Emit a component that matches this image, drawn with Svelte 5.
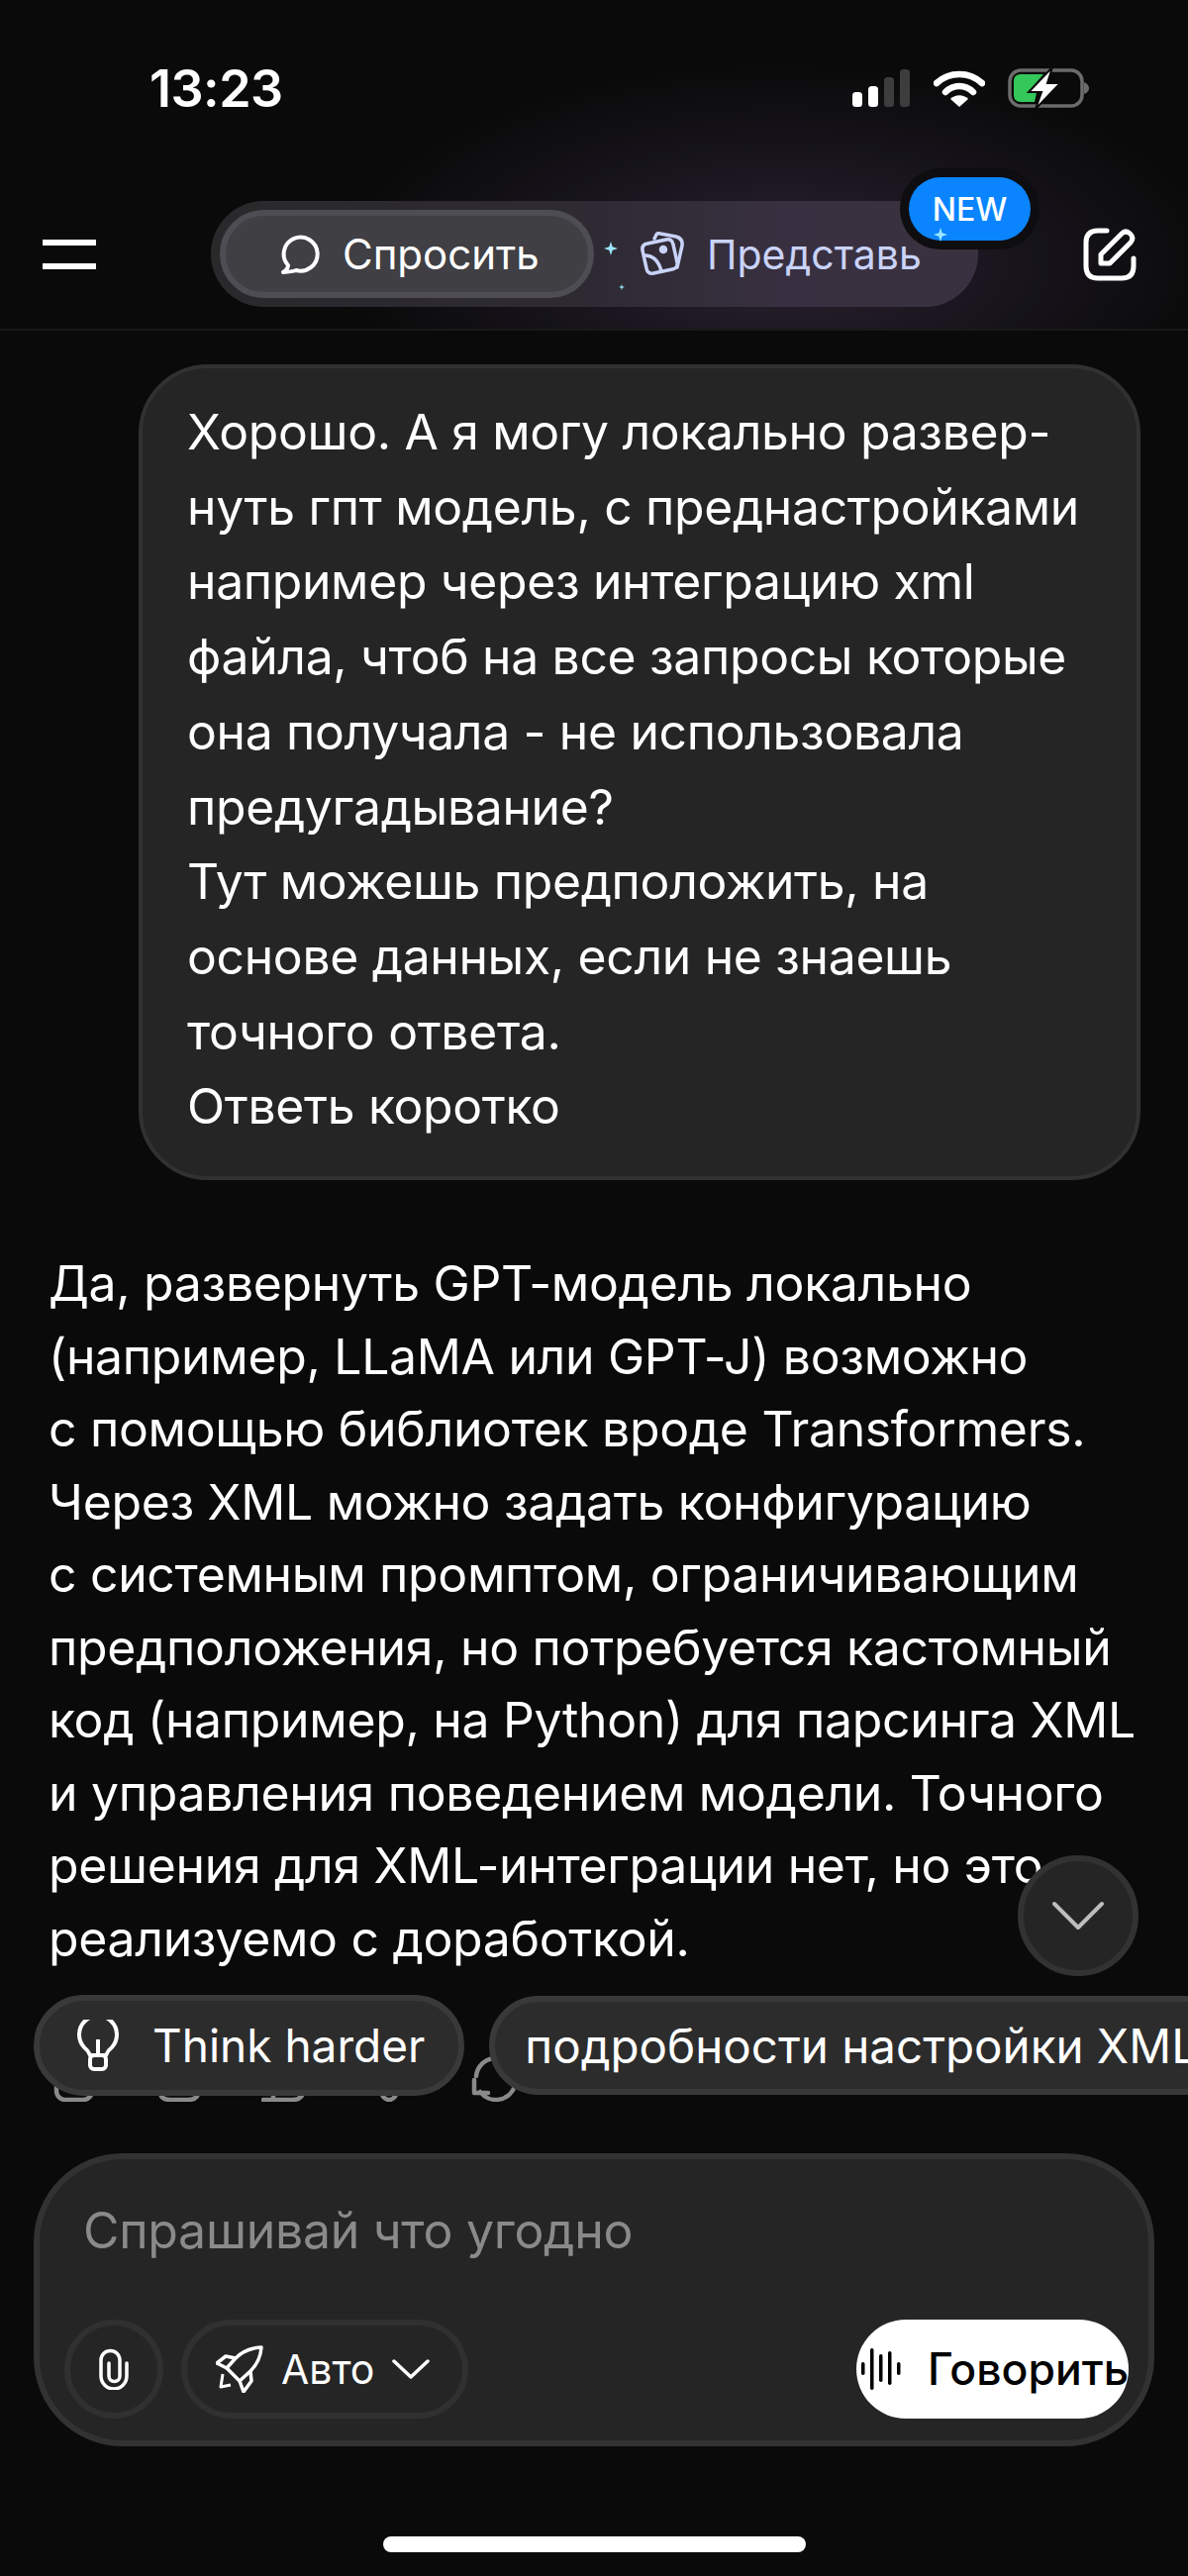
<script>
    const userLines = [
        "Хорошо. А я могу локально развер-",
        "нуть гпт модель, с преднастройками",
        "например через интеграцию xml",
        "файла, чтоб на все запросы которые",
        "она получала - не использовала",
        "предугадывание?",
        "Тут можешь предположить, на",
        "основе данных, если не знаешь",
        "точного ответа.",
        "Ответь коротко",
    ];
    const replyLines = [
        "Да, развернуть GPT-модель локально",
        "(например, LLaMA или GPT-J) возможно",
        "с помощью библиотек вроде Transformers.",
        "Через XML можно задать конфигурацию",
        "с системным промптом, ограничивающим",
        "предположения, но потребуется кастомный",
        "код (например, на Python) для парсинга XML",
        "и управления поведением модели. Точного",
        "решения для XML-интеграции нет, но это",
        "реализуемо с доработкой.",
    ];
</script>

<div class="app">
    <div class="top">
        <div class="status">
            <span class="time">13:23</span>
            <div class="status-icons">
                <svg width="60" height="38" viewBox="0 0 60 38">
                    <rect x="1" y="23" width="10" height="15" rx="3.5" fill="#fff" />
                    <rect x="17" y="17" width="10" height="21" rx="3.5" fill="#fff" />
                    <rect x="33" y="8" width="10" height="30" rx="3.5" fill="#3d3d3d" />
                    <rect x="49" y="0" width="10" height="38" rx="3.5" fill="#3d3d3d" />
                </svg>
                <svg width="52" height="38" viewBox="0 0 52 38">
                    <path d="M3 14 C16 2 36 2 49 14" fill="none" stroke="#fff" stroke-width="6.5" stroke-linecap="round" />
                    <path d="M12 23 C20 15 32 15 40 23" fill="none" stroke="#fff" stroke-width="6.5" stroke-linecap="round" />
                    <path d="M17 30 C22 25 30 25 35 30 L26 38 Z" fill="#fff" />
                </svg>
                <svg class="battery" width="82" height="40" viewBox="0 0 82 40">
                    <rect x="2" y="2" width="73" height="36" rx="11" fill="none" stroke="#6b6b6b" stroke-width="3.5" />
                    <path d="M77 14 Q82 16 82 20 Q82 24 77 26 Z" fill="#6b6b6b" />
                    <path d="M6 13 Q6 6 13 6 H36 L24 20 H30 L27 34 H13 Q6 34 6 27 Z" fill="#34c759" />
                    <path d="M45 -1 L21 24 H34 L28 41 L53 15 H40 Z" fill="#fff" stroke="#0b0b0d" stroke-width="2" />
                </svg>
            </div>
        </div>
        <header class="header">
            <div class="burger"><span></span><span></span></div>
            <div class="seg">
                <div class="seg-active">
                    <svg width="40" height="40" viewBox="0 0 40 40">
                        <path d="M8 31 A17 17 0 1 1 16 36 Q12 37.500 3 38 Q8 35 8 31 Z" fill="none" stroke="#fff" stroke-width="4" stroke-linejoin="round" />
                    </svg>
                    <span>Спросить</span>
                </div>
                <div class="seg-item">
                    <svg width="46" height="46" viewBox="0 0 46 46" fill="none" stroke="#c9d3f8" stroke-width="3.500" stroke-linecap="round" stroke-linejoin="round">
                        <path d="M15 7 L17 3 Q18 1 21 2 L37 5 Q44 7 43 14 L38 36" />
                        <path d="M8 12 L27 8 Q33 7 34 13 L38 31 Q39 37 33 38 L14 42 Q8 43 7 37 L3 19 Q2 13 8 12 Z" />
                        <path d="M5 24 Q18 24 22 40" />
                        <circle cx="24" cy="18" r="2.500" fill="#c9d3f8" />
                    </svg>
                    <span>Представь</span>
                </div>
                <i class="star star-a"></i>
                <i class="star star-b"></i>
                <div class="badge">NEW<i class="star star-c"></i></div>
            </div>
            <svg class="compose" width="54" height="54" viewBox="0 0 54 54" fill="none" stroke="#fff" stroke-width="5" stroke-linecap="round" stroke-linejoin="round">
                <path d="M24 3 H15 Q3 3 3 15 V39 Q3 51 15 51 H39 Q51 51 51 39 V31" />
                <path d="M18 36 V27 L39 6 Q43 2 47.500 6 Q52 10 48 15 L27 36 Z" />
            </svg>
        </header>
    </div>

    <main class="main">
        <div class="bubble">
            {#each userLines as line}
                <div>{line}</div>
            {/each}
        </div>

        <div class="reply">
            {#each replyLines as line}
                <div>{line}</div>
            {/each}
        </div>

        <div class="actions">
            <svg viewBox="0 0 46 46"><rect x="5" y="8" width="36" height="36" rx="9" /></svg>
            <svg viewBox="0 0 46 46"><path d="M3 28 V33 Q3 44 14 44 H32 Q43 44 43 33 V28" /></svg>
            <svg viewBox="0 0 46 46"><path d="M2 44 H32 Q42 44 44 32 M12 30 V44" /></svg>
            <svg viewBox="0 0 46 46"><path d="M14 32 Q16 44 23 44 Q30 44 32 32" /></svg>
            <svg viewBox="0 0 46 46"><path d="M5 20 A20 20 0 0 1 24 2 M44 30 A20 20 0 0 1 9 36 M3 24 V37 H17" /></svg>
        </div>

        <button class="scroll-down" aria-label="Вниз">
            <svg width="52" height="30" viewBox="0 0 52 30" fill="none" stroke="#bdbdbd" stroke-width="4" stroke-linecap="round" stroke-linejoin="round">
                <path d="M2 3 L26 27 L50 3" />
            </svg>
        </button>

        <div class="chips">
            <div class="chip">
                <svg width="42" height="52" viewBox="0 0 42 52" fill="none" stroke="#fff" stroke-width="4" stroke-linejoin="round">
                    <path d="M13 36 Q11 31 7 28 A19 19 0 1 1 35 28 Q31 31 29 36 Z" />
                    <rect x="13" y="36" width="16" height="14" rx="4" />
                    <path d="M21 20 V36" />
                </svg>
                <span>Think harder</span>
            </div>
            <div class="chip chip-second"><span>подробности настройки XML</span></div>
        </div>
    </main>

    <div class="composer">
        <div class="placeholder">Спрашивай что угодно</div>
        <div class="tools">
            <button class="attach" aria-label="Прикрепить">
                <svg width="32" height="42" viewBox="0 0 32 42" fill="none" stroke="#fff" stroke-width="3.500" stroke-linecap="round">
                    <path d="M29 15 V28 A13 13 0 0 1 3 28 V12 A9.500 9.500 0 0 1 22 12 V28 A5.500 5.500 0 0 1 11 28 V15" />
                </svg>
            </button>
            <button class="mode">
                <svg width="48" height="48" viewBox="0 0 48 48" fill="none" stroke="#fff" stroke-width="3.500" stroke-linejoin="round">
                    <path d="M46 2 Q30 3 20 13 L11 23 L24 36 L35 26 Q45 16 46 2 Z" />
                    <path d="M20 13 L10 11 L1 18 L11 23 M35 26 L36 36 L28 47 L24 36" />
                    <path d="M7 29 L5 42 L15 40" stroke-width="3" />
                </svg>
                <span>Авто</span>
                <svg width="38" height="22" viewBox="0 0 38 22" fill="none" stroke="#fff" stroke-width="3.500" stroke-linecap="round" stroke-linejoin="round">
                    <path d="M2 3 L19 19 L36 3" />
                </svg>
            </button>
            <button class="speak">
                <svg width="40" height="42" viewBox="0 0 40 42" fill="#000">
                    <rect x="0" y="14" width="3.500" height="13" rx="1.700" />
                    <rect x="9" y="0" width="3.500" height="42" rx="1.700" />
                    <rect x="18" y="6" width="3.500" height="28" rx="1.700" />
                    <rect x="27" y="3" width="3.500" height="34" rx="1.700" />
                    <rect x="36" y="14" width="3.500" height="13" rx="1.700" />
                </svg>
                <span>Говорить</span>
            </button>
        </div>
    </div>

    <div class="home"></div>
</div>

<style>
    :global(body) {
        margin: 0;
        background: #0a0a0a;
    }

    .app {
        position: relative;
        display: flex;
        flex-direction: column;
        width: 1200px;
        height: 2602px;
        overflow: hidden;
        background: #0a0a0a;
        color: #fff;
        font-family: Inter, "Noto Sans", sans-serif;
    }

    /* top bars */
    .top {
        height: 332px;
        border-bottom: 2px solid #191919;
        background: radial-gradient(ellipse 440px 200px at 790px 265px, #2a2230 0%, #17141c 55%, rgba(10, 10, 10, 0) 100%);
    }

    .status {
        display: flex;
        align-items: center;
        justify-content: space-between;
        height: 178px;
        padding: 0 100px 0 151px;
        box-sizing: border-box;
    }

    .time {
        font-size: 52px;
        font-weight: 600;
        letter-spacing: -0.5px;
    }

    .status-icons {
        display: flex;
        align-items: center;
        gap: 23px;
    }

    .battery {
        overflow: visible;
    }

    .header {
        display: flex;
        align-items: center;
        height: 154px;
        padding: 3px 52px 0 43px;
        box-sizing: border-box;
    }

    .burger {
        display: flex;
        flex-direction: column;
        gap: 18px;
    }

    .burger span {
        display: block;
        width: 54px;
        height: 6px;
        background: #fff;
    }

    .seg {
        position: relative;
        display: flex;
        align-items: center;
        box-sizing: border-box;
        width: 775px;
        height: 107px;
        margin-left: 116px;
        padding: 0 9px;
        border-radius: 54px;
        background: linear-gradient(90deg, #29292b 0%, #2e2a33 50%, #383040 75%, #3a3140 100%);
    }

    .seg-active {
        display: flex;
        align-items: center;
        gap: 23px;
        box-sizing: border-box;
        width: 378px;
        height: 89px;
        padding-left: 55px;
        border: 6px solid #4e4d53;
        border-radius: 45px;
        background: #403f44;
        font-size: 42px;
    }

    .seg-item {
        display: flex;
        align-items: center;
        gap: 22px;
        margin-left: 46px;
        color: #c9d3f8;
        font-size: 41px;
    }

    .star {
        position: absolute;
        display: block;
        background: #9be6ff;
        clip-path: polygon(50% 0, 62% 38%, 100% 50%, 62% 62%, 50% 100%, 38% 62%, 0 50%, 38% 38%);
    }

    .star-a {
        left: 397px;
        top: 41px;
        width: 14px;
        height: 14px;
    }

    .star-b {
        left: 412px;
        top: 84px;
        width: 6px;
        height: 6px;
    }

    .star-c {
        left: 25px;
        top: 51px;
        width: 14px;
        height: 14px;
    }

    .badge {
        position: absolute;
        right: -53px;
        top: -24px;
        display: flex;
        align-items: center;
        justify-content: center;
        width: 123px;
        height: 64px;
        border-radius: 32px;
        background: #0a84ff;
        box-shadow: 0 0 0 9px #0e0d10;
        font-size: 32px;
        font-weight: 500;
    }

    .compose {
        margin-left: auto;
    }

    /* messages */
    .main {
        position: relative;
        flex: 1;
        min-height: 0;
    }

    .bubble {
        box-sizing: border-box;
        width: 1012px;
        margin: 34px 0 0 140px;
        padding: 27px 45px 32px;
        border: 4px solid #313131;
        border-radius: 70px;
        background: #252525;
        font-size: 49.800px;
        line-height: 75.700px;
        white-space: nowrap;
        letter-spacing: -0.3px;
    }

    .reply {
        margin: 68px 0 0 49px;
        font-size: 49.900px;
        line-height: 73.500px;
        white-space: nowrap;
        letter-spacing: -0.3px;
    }

    .actions {
        display: flex;
        gap: 60px;
        margin: 82px 0 0 52px;
    }

    .actions svg {
        width: 46px;
        height: 46px;
        fill: none;
        stroke: #8a8a8a;
        stroke-width: 4.500;
        stroke-linecap: round;
        stroke-linejoin: round;
    }

    .scroll-down {
        position: absolute;
        right: 50px;
        bottom: 179px;
        display: flex;
        align-items: center;
        justify-content: center;
        box-sizing: border-box;
        width: 122px;
        height: 122px;
        padding: 0;
        border: 6px solid #323232;
        border-radius: 50%;
        background: #252525;
    }

    .chips {
        position: absolute;
        left: 34px;
        bottom: 58px;
        display: flex;
        align-items: center;
        gap: 25px;
    }

    .chip {
        display: flex;
        align-items: center;
        gap: 34px;
        box-sizing: border-box;
        height: 102px;
        padding: 0 34px 0 38px;
        border: 6px solid #393939;
        border-radius: 51px;
        background: #2c2c2c;
        font-size: 46px;
        white-space: nowrap;
    }

    .chip-second {
        height: 100px;
        padding-left: 30px;
        font-size: 47.500px;
    }

    /* composer */
    .composer {
        box-sizing: border-box;
        width: 1132px;
        height: 296px;
        margin: 0 34px 131px;
        padding: 37px 20px 0 25px;
        border: 6px solid #323232;
        border-radius: 90px;
        background: #252525;
    }

    .placeholder {
        margin-left: 19px;
        color: #8a8a8a;
        font-size: 50px;
        line-height: 70px;
        letter-spacing: -0.3px;
    }

    .tools {
        display: flex;
        align-items: center;
        margin-top: 55px;
    }

    .tools button {
        display: flex;
        align-items: center;
        box-sizing: border-box;
        height: 100px;
        padding: 0;
        border-radius: 50px;
        background: transparent;
        color: #fff;
        font-family: inherit;
    }

    .attach {
        justify-content: center;
        width: 100px;
        border: 6px solid #303030;
    }

    .mode {
        gap: 18px;
        width: 290px;
        margin-left: 18px;
        padding-left: 29px !important;
        border: 6px solid #303030;
        font-size: 41px;
    }

    .speak {
        gap: 27px;
        width: 275px;
        margin-left: auto;
        padding-left: 5px !important;
        border: none;
        overflow: hidden;
        background: #fff !important;
        color: #000 !important;
        font-size: 44.500px;
        font-weight: 500;
    }

    .home {
        position: absolute;
        left: 387px;
        top: 2562px;
        width: 427px;
        height: 16px;
        border-radius: 8px;
        background: #fff;
    }
</style>
